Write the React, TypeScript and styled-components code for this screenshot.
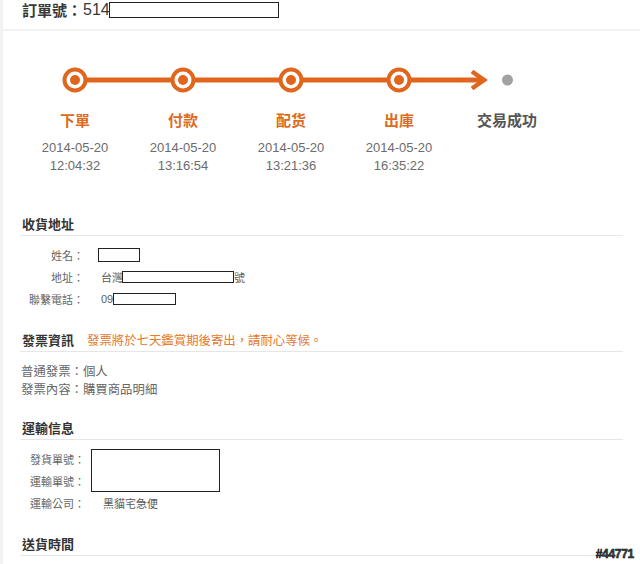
import React from "react";
import styled, { createGlobalStyle } from "styled-components";

const FONT = `"Liberation Sans", "Noto Sans CJK TC", sans-serif`;
const ORANGE = "#e0661d";

const Global = createGlobalStyle`
  html, body { margin: 0; padding: 0; }
  body { font-family: ${FONT}; background: #f4f4f4; }
  * { box-sizing: border-box; }
`;

const Page = styled.div`
  position: relative;
  width: 640px;
  height: 564px;
  overflow: hidden;
  display: flex;
  flex-direction: column;
  gap: 2px;
  background: #f2f2f2;
`;

const Header = styled.div`
  height: 29px;
  margin-left: 3px;
  background: #fff;
  display: flex;
  align-items: flex-start;
  padding: 0 0 0 19px;
`;

const OrderTitle = styled.div`
  display: flex;
  align-items: center;
  height: 19px;
  font-size: 15px;
  color: #383838;
`;

const OrderLabel = styled.span`
  font-weight: 700;
`;

const OrderNumber = styled.span`
  font-size: 16px;
  margin-left: 1px;
`;

const Redact = styled.span<{ $w: number; $h: number; $ml?: number }>`
  display: inline-block;
  width: ${(p) => p.$w}px;
  height: ${(p) => p.$h}px;
  margin-left: ${(p) => p.$ml ?? 0}px;
  border: 1px solid #222;
  background: #fff;
  vertical-align: middle;
  flex: none;
`;

const Panel = styled.div`
  flex: 1;
  margin-left: 3px;
  background: #fff;
  padding: 34px 17px 0 17px;
`;

const Timeline = styled.div`
  margin-left: 1px;
  width: 540px;
`;

const Track = styled.svg`
  display: block;
`;

const Steps = styled.div`
  display: grid;
  grid-template-columns: repeat(5, 108px);
`;

const Step = styled.div`
  display: flex;
  flex-direction: column;
  align-items: center;
`;

const StepName = styled.div<{ $done: boolean }>`
  margin-top: 16px;
  line-height: 20px;
  font-size: 15px;
  font-weight: 700;
  color: ${(p) => (p.$done ? "#dc6c22" : "#555")};
`;

const StepTime = styled.div`
  margin-top: 8px;
  font-size: 13px;
  line-height: 18px;
  color: #6c6c6c;
  text-align: center;
`;

const Section = styled.section<{ $mt: number }>`
  margin-top: ${(p) => p.$mt}px;
`;

const SectionHead = styled.div`
  display: flex;
  align-items: center;
  height: 21px;
  padding: 0 0 1px 2px;
  border-bottom: 1px solid #e6e6e6;
  font-size: 13px;
  line-height: 20px;
  font-weight: 700;
  color: #333;
`;

const HeadNote = styled.span`
  margin-left: 13px;
  font-size: 12.4px;
  font-weight: 400;
  color: #e5792d;
`;

const FieldGrid = styled.div<{ $labelW: number; $gap: number; $pl: number }>`
  display: grid;
  grid-template-columns: ${(p) => p.$labelW}px 1fr;
  grid-auto-rows: 22px;
  column-gap: ${(p) => p.$gap}px;
  padding: 8px 0 0 ${(p) => p.$pl}px;
  font-size: 11px;
  color: #5c5c5c;
`;

const FieldLabel = styled.div<{ $align: "left" | "right" }>`
  display: flex;
  align-items: center;
  justify-content: ${(p) => (p.$align === "right" ? "flex-end" : "flex-start")};
  color: #666;
  white-space: nowrap;
`;

const FieldValue = styled.div<{ $pl?: number }>`
  display: flex;
  align-items: center;
  padding-left: ${(p) => p.$pl ?? 0}px;
  white-space: nowrap;
`;

const BigBox = styled.div`
  grid-row: span 2;
  align-self: center;
  width: 129px;
  height: 43px;
  border: 1px solid #222;
  background: #fff;
  margin-top: 1px;
`;

const InvoiceLines = styled.div`
  padding: 11px 0 0 1px;
  font-size: 12.4px;
  line-height: 18px;
  color: #666;
`;

const Watermark = styled.div`
  position: absolute;
  right: 6px;
  bottom: 4px;
  font-family: "Liberation Sans", sans-serif;
  font-weight: 700;
  font-size: 12px;
  line-height: 12px;
  color: #4a4a4a;
  letter-spacing: -0.3px;
  -webkit-text-stroke: 0.5px #000;
  text-shadow: 1px 0 0 #fff, -1px 0 0 #fff, 0 1px 0 #fff, 0 -1px 0 #fff;
`;

const steps = [
  { name: "下單", date: "2014-05-20", time: "12:04:32" },
  { name: "付款", date: "2014-05-20", time: "13:16:54" },
  { name: "配货", date: "2014-05-20", time: "13:21:36" },
  { name: "出庫", date: "2014-05-20", time: "16:35:22" },
];

function TrackDrawing() {
  const centers = [54, 162, 270, 378];
  return (
    <Track width={540} height={30} viewBox="0 0 540 30">
      <line x1={54} y1={15} x2={461} y2={15} stroke={ORANGE} strokeWidth={5} />
      <polyline
        points="451,6.5 463,15 451,23.5"
        fill="none"
        stroke={ORANGE}
        strokeWidth={4.5}
        strokeLinejoin="miter"
      />
      {centers.map((cx) => (
        <g key={cx}>
          <circle cx={cx} cy={15} r={10.5} fill="#fff" stroke={ORANGE} strokeWidth={4} />
          <circle cx={cx} cy={15} r={5} fill={ORANGE} />
        </g>
      ))}
      <circle cx={486.5} cy={15} r={5.5} fill="#a2a2a2" />
    </Track>
  );
}

export default function App() {
  return (
    <>
      <Global />
      <Page>
        <Header>
          <OrderTitle>
            <OrderLabel>訂單號：</OrderLabel>
            <OrderNumber>514</OrderNumber>
            <Redact $w={170} $h={16} $ml={-1} />
          </OrderTitle>
        </Header>
        <Panel>
          <Timeline>
            <TrackDrawing />
            <Steps>
              {steps.map((s) => (
                <Step key={s.name}>
                  <StepName $done>{s.name}</StepName>
                  <StepTime>
                    {s.date}
                    <br />
                    {s.time}
                  </StepTime>
                </Step>
              ))}
              <Step>
                <StepName $done={false}>交易成功</StepName>
              </Step>
            </Steps>
          </Timeline>

          <Section $mt={40}>
            <SectionHead>收貨地址</SectionHead>
            <FieldGrid $labelW={64} $gap={17} $pl={0}>
              <FieldLabel $align="right">姓名：</FieldLabel>
              <FieldValue>
                <Redact $w={42} $h={14} $ml={-3} />
              </FieldValue>
              <FieldLabel $align="right">地址：</FieldLabel>
              <FieldValue>
                台灣
                <Redact $w={112} $h={12} $ml={-1} />
                號
              </FieldValue>
              <FieldLabel $align="right">聯繫電話：</FieldLabel>
              <FieldValue>
                09
                <Redact $w={63} $h={12} $ml={0} />
              </FieldValue>
            </FieldGrid>
          </Section>

          <Section $mt={21}>
            <SectionHead>
              發票資訊
              <HeadNote>發票將於七天鑑賞期後寄出，請耐心等候。</HeadNote>
            </SectionHead>
            <InvoiceLines>
              <div>普通發票：個人</div>
              <div>發票內容：購買商品明細</div>
            </InvoiceLines>
          </Section>

          <Section $mt={20}>
            <SectionHead>運輸信息</SectionHead>
            <FieldGrid $labelW={56} $gap={5} $pl={10}>
              <FieldLabel $align="left">發貨單號：</FieldLabel>
              <BigBox />
              <FieldLabel $align="left">運輸單號：</FieldLabel>
              <FieldLabel $align="left">運輸公司：</FieldLabel>
              <FieldValue $pl={12}>黑貓宅急便</FieldValue>
            </FieldGrid>
          </Section>

          <Section $mt={21}>
            <SectionHead>送貨時間</SectionHead>
          </Section>
        </Panel>
        <Watermark>#44771</Watermark>
      </Page>
    </>
  );
}
